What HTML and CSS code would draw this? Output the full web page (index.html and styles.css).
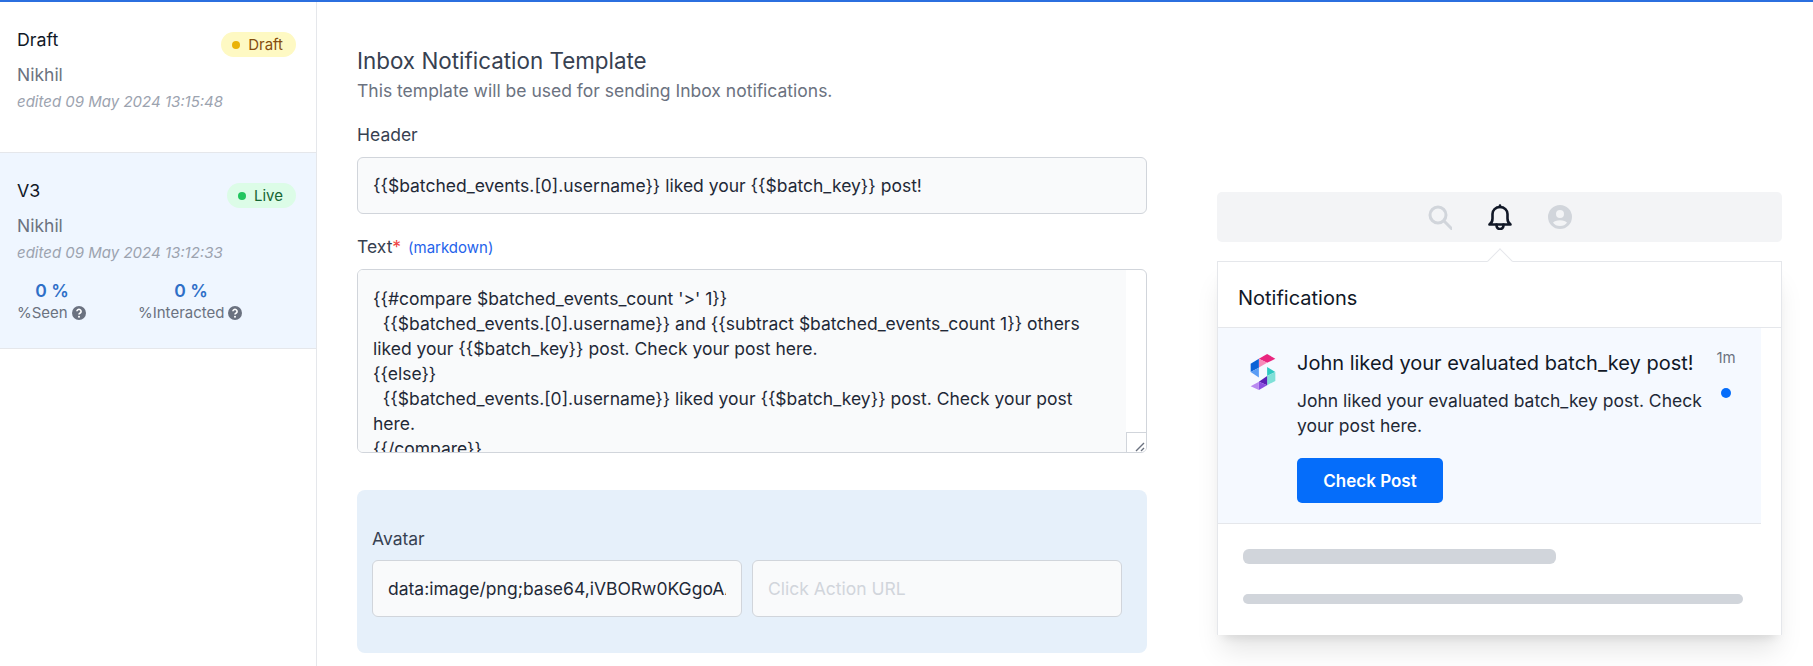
FILE: index.html
```html
<!DOCTYPE html>
<html lang="en">
<head>
<meta charset="utf-8">
<title>Inbox Notification Template</title>
<link rel="stylesheet" href="styles.css">
</head>
<body>
<div class="page">
  <aside class="sidebar">
    <div class="version">
      <div class="version-top">
        <span class="version-name">Draft</span>
        <span class="badge badge-draft"><i class="dot"></i>Draft</span>
      </div>
      <div class="version-author">Nikhil</div>
      <div class="version-edited">edited 09 May 2024 13:15:48</div>
    </div>
    <div class="version version-live">
      <div class="version-top">
        <span class="version-name">V3</span>
        <span class="badge badge-live"><i class="dot"></i>Live</span>
      </div>
      <div class="version-author">Nikhil</div>
      <div class="version-edited">edited 09 May 2024 13:12:33</div>
      <div class="stats">
        <div class="stat stat-seen">
          <div class="stat-value">0 %</div>
          <div class="stat-label">%Seen
            <svg class="help" viewBox="0 0 14 14"><circle cx="7" cy="7" r="7" fill="#6b7280"/><path d="M4.900 5.300a2.100 2 0 1 1 3.300 1.700c-.8.5-1.200.8-1.200 1.600" fill="none" stroke="#fff" stroke-width="1.600"/><circle cx="7" cy="10.800" r="1" fill="#fff"/></svg>
          </div>
        </div>
        <div class="stat stat-interacted">
          <div class="stat-value">0 %</div>
          <div class="stat-label">%Interacted
            <svg class="help" viewBox="0 0 14 14"><circle cx="7" cy="7" r="7" fill="#6b7280"/><path d="M4.900 5.300a2.100 2 0 1 1 3.300 1.700c-.8.5-1.200.8-1.200 1.600" fill="none" stroke="#fff" stroke-width="1.600"/><circle cx="7" cy="10.800" r="1" fill="#fff"/></svg>
          </div>
        </div>
      </div>
    </div>
  </aside>

  <main class="form">
    <h1 class="form-title">Inbox Notification Template</h1>
    <p class="form-sub">This template will be used for sending Inbox notifications.</p>

    <label class="field-label field-header">Header</label>
    <input class="field-input" type="text" value="{{$batched_events.[0].username}} liked your {{$batch_key}} post!">

    <label class="field-label field-text">Text<span class="req">*</span> <span class="md">(markdown)</span></label>
    <div class="textarea">
      <div class="textarea-body">{{#compare $batched_events_count '&gt;' 1}}
  {{$batched_events.[0].username}} and {{subtract $batched_events_count 1}} others liked your {{$batch_key}} post. Check your post here.
{{else}}
  {{$batched_events.[0].username}} liked your {{$batch_key}} post. Check your post here.
{{/compare}}</div>
      <div class="textarea-gutter"></div>
      <div class="resizer"><svg viewBox="0 0 12 12"><path d="M2 11 10 3M7 11l3-3" stroke="#6b7280" stroke-width="1.400" fill="none"/></svg></div>
    </div>

    <section class="avatar-panel">
      <label class="field-label">Avatar</label>
      <div class="avatar-row">
        <input class="field-input" type="text" value="data:image/png;base64,iVBORw0KGgoAAAANSUhEUgAAAAEAAAAB">
        <input class="field-input" type="text" placeholder="Click Action URL">
      </div>
    </section>
  </main>

  <section class="preview">
    <div class="topbar">
      <svg class="tb-icon" viewBox="0 0 24 24" fill="none" stroke="#d1d5db" stroke-width="3" stroke-linecap="round"><circle cx="10" cy="10" r="8"/><path d="m16 16 8 8"/></svg>
      <svg class="tb-icon" viewBox="0 0 24 26" fill="none" stroke="#111827" stroke-width="2.600" stroke-linecap="round" stroke-linejoin="round"><path d="M1.500 20.500h21c-1.800-1-3-2.700-3-6V10c0-3.800-3-7-7.500-7S4.500 6.200 4.500 10v4.500c0 3.300-1.200 5-3 6Z"/><path d="M12 1.500V3M8.500 20.500c0 6 7 6 7 0"/></svg>
      <svg class="tb-icon" viewBox="0 0 24 24"><path fill="#d1d5db" fill-rule="evenodd" d="M12 0a12 12 0 1 0 0 24 12 12 0 0 0 0-24Zm0 5a4 4 0 1 1 0 8 4 4 0 0 1 0-8Zm0 16c-3 0-5.500-1.300-7-3.300.8-1.500 3.800-2.500 7-2.500s6.200 1 7 2.500c-1.500 2-4 3.300-7 3.300Z"/></svg>
    </div>
    <div class="panel">
      <span class="panel-arrow"></span>
      <div class="panel-head">Notifications</div>
      <div class="notification">
        <svg class="logo" viewBox="58 38 79 114">
          <path fill="#e9267f" d="M85 55 110 40l25 15-25 12z"/>
          <path fill="#f78bb8" d="M85 55l25 12-25 14z"/>
          <path fill="#0b62d6" d="M60 70l25-15v27L60 95z"/>
          <path fill="#5a9df5" d="M60 95l25-13v30z"/>
          <path fill="#2fc9c2" d="M110 80l25 15-25 12z"/>
          <path fill="#7fe0d8" d="M135 95v27l-25 13v-28z"/>
          <path fill="#5b21b6" d="M85 125l25-18v28z"/>
          <path fill="#8a4fe0" d="M85 125l25 10-25 15z"/>
          <path fill="#b98af0" d="M60 138l25-13v25z"/>
        </svg>
        <div class="note-body">
          <div class="note-title">John liked your evaluated batch_key post!</div>
          <div class="note-text">John liked your evaluated batch_key post. Check your post here.</div>
          <button class="note-btn">Check Post</button>
        </div>
        <div class="note-meta">
          <span class="note-time">1m</span>
          <i class="note-dot"></i>
        </div>
      </div>
      <div class="skeletons">
        <div class="skel skel-a"></div>
        <div class="skel skel-b"></div>
      </div>
    </div>
  </section>
</div>
</body>
</html>
```

FILE: styles.css
```css
* { box-sizing: border-box; }
html, body { margin: 0; padding: 0; background: #fff; }
body { font-family: Inter, "Liberation Sans", sans-serif; color: #374151; font-size: 17.5px; }

.page { display: flex; height: 666px; overflow: hidden; border-top: 2px solid #2b6fdf; }

/* sidebar */
.sidebar { width: 317px; flex: none; border-right: 1px solid #e5e7eb; }
.version { padding: 0 20px 0 17px; border-bottom: 1px solid #e5e7eb; height: 151px; padding-top: 26px; }
.version-live { background: #eff6ff; height: 196px; padding-top: 26px; }
.version-top { display: flex; justify-content: space-between; align-items: flex-start; height: 35px; }
.version-name { font-size: 17.8px; font-weight: 400; color: #111827; line-height: 24px; }
.badge { display: inline-flex; align-items: center; height: 25px; margin-top: 4px; padding: 0 13px 0 11px; border-radius: 13px; font-size: 15px; }
.badge .dot { width: 8px; height: 8px; border-radius: 50%; margin-right: 8px; }
.badge-draft { background: #fef9c3; color: #854d0e; }
.badge-draft .dot { background: #eab308; }
.badge-live { background: #dcfce7; color: #166534; padding-left: 11px; }
.badge-live .dot { background: #22c55e; }
.version-author { color: #6b7280; line-height: 24px; font-size: 17.5px; }
.version-edited { color: #9ca3af; font-style: italic; font-size: 15px; line-height: 20px; margin-top: 5px; }
.stats { display: flex; margin-top: 16px; }
.stat-seen { width: 121px; }
.stat-value { font-weight: 600; color: #2e6fc7; line-height: 24px; }
.stat-seen .stat-value { text-align: center; width: 70px; }
.stat-interacted .stat-value { text-align: center; width: 106px; }
.stat-label { display: flex; align-items: center; gap: 4px; color: #6b7280; font-size: 15px; line-height: 20px; }
.help { width: 14px; height: 14px; flex: none; }

/* form */
.form { width: 790px; flex: none; margin-left: 40px; padding-top: 45px; }
.form-title { margin: 0; font-size: 22.400px; font-weight: 400; line-height: 28px; color: #374151; }
.form-sub { margin: 4px 0 0; line-height: 24px; color: #6b7280; }
.field-label { display: block; line-height: 24px; color: #374151; }
.field-header { margin-top: 20px; }
.field-text { margin-top: 21px; }
.req { color: #ef4444; }
.md { color: #2563eb; font-size: 15px; margin-left: 2px; }
.field-input { display: block; width: 100%; height: 57px; margin-top: 10px; padding: 0 15px; border: 1px solid #d1d5db; border-radius: 6px; background: #f9fafb; font: 17.5px/24px Inter, "Liberation Sans", sans-serif; color: #1f2937; outline: none; }
.field-input::placeholder { color: #d1d5db; }

.textarea { position: relative; display: flex; height: 184px; margin-top: 9px; border: 1px solid #d1d5db; border-radius: 6px; overflow: hidden; background: #fff; }
.textarea-body { flex: 1; padding: 16px 15px 0; background: #f9fafb; white-space: pre-wrap; line-height: 25px; color: #1f2937; overflow: hidden; }
.textarea-gutter { width: 20px; flex: none; }
.resizer { position: absolute; right: 0; bottom: 0; width: 20px; height: 20px; border: 1px solid #d1d5db; border-right: 0; border-bottom: 0; background: #fff; }
.resizer svg { display: block; width: 12px; height: 12px; margin: 7px 0 0 7px; }

.avatar-panel { margin-top: 37px; padding: 37px 25px 36px 15px; background: #e6f0fa; border-radius: 8px; }
.avatar-row { display: flex; gap: 10px; }
.avatar-row .field-input { flex: 1 1 0; min-width: 0; margin-top: 9px; }

/* preview */
.preview { width: 566px; flex: none; margin-left: 70px; padding-top: 190px; }
.topbar { display: flex; justify-content: center; align-items: center; gap: 36px; width: 565px; height: 50px; background: #f3f4f6; border-radius: 5px; }
.tb-icon { width: 24px; height: 26px; flex: none; }
.panel { position: relative; width: 565px; height: 374px; margin-top: 19px; background: #fff; border: 1px solid #e5e7eb; border-bottom: 0; box-shadow: 0 20px 25px -5px rgba(0,0,0,.1), 0 8px 10px -6px rgba(0,0,0,.1); }
.panel-arrow { position: absolute; left: 273px; top: -10px; width: 18px; height: 18px; background: #fff; border: 1px solid #e5e7eb; border-right: 0; border-bottom: 0; transform: rotate(45deg); }
.panel-head { position: relative; height: 66px; padding: 24px 0 0 20px; font-size: 20px; line-height: 24px; color: #111827; border-bottom: 1px solid #e5e7eb; }
.notification { display: flex; width: 543px; height: 196px; padding: 23px 0 0 32px; background: #f5f9ff; border-bottom: 1px solid #e5e7eb; }
.logo { width: 26px; height: 38px; flex: none; margin: 2px 21px 0 0; }
.note-body { width: 414px; flex: none; }
.note-title { font-size: 20px; font-weight: 400; line-height: 24px; color: #111827; white-space: nowrap; }
.note-text { margin-top: 13px; line-height: 25px; color: #1f2937; }
.note-btn { display: block; width: 146px; height: 45px; margin-top: 20px; border: 0; border-radius: 5px; background: #056dfa; color: #fff; font: 600 17px/24px Inter, "Liberation Sans", sans-serif; }
.note-meta { display: flex; flex-direction: column; align-items: center; margin-left: 6px; width: 18px; }
.note-time { font-size: 15px; line-height: 16px; color: #6b7280; margin-top: -1px; }
.note-dot { width: 10px; height: 10px; margin-top: 22px; border-radius: 50%; background: #056dfa; }
.skeletons { padding: 25px 0 0 25px; }
.skel { background: #d1d5db; border-radius: 6px; }
.skel-a { width: 313px; height: 15px; }
.skel-b { width: 500px; height: 10px; margin-top: 30px; }
```
